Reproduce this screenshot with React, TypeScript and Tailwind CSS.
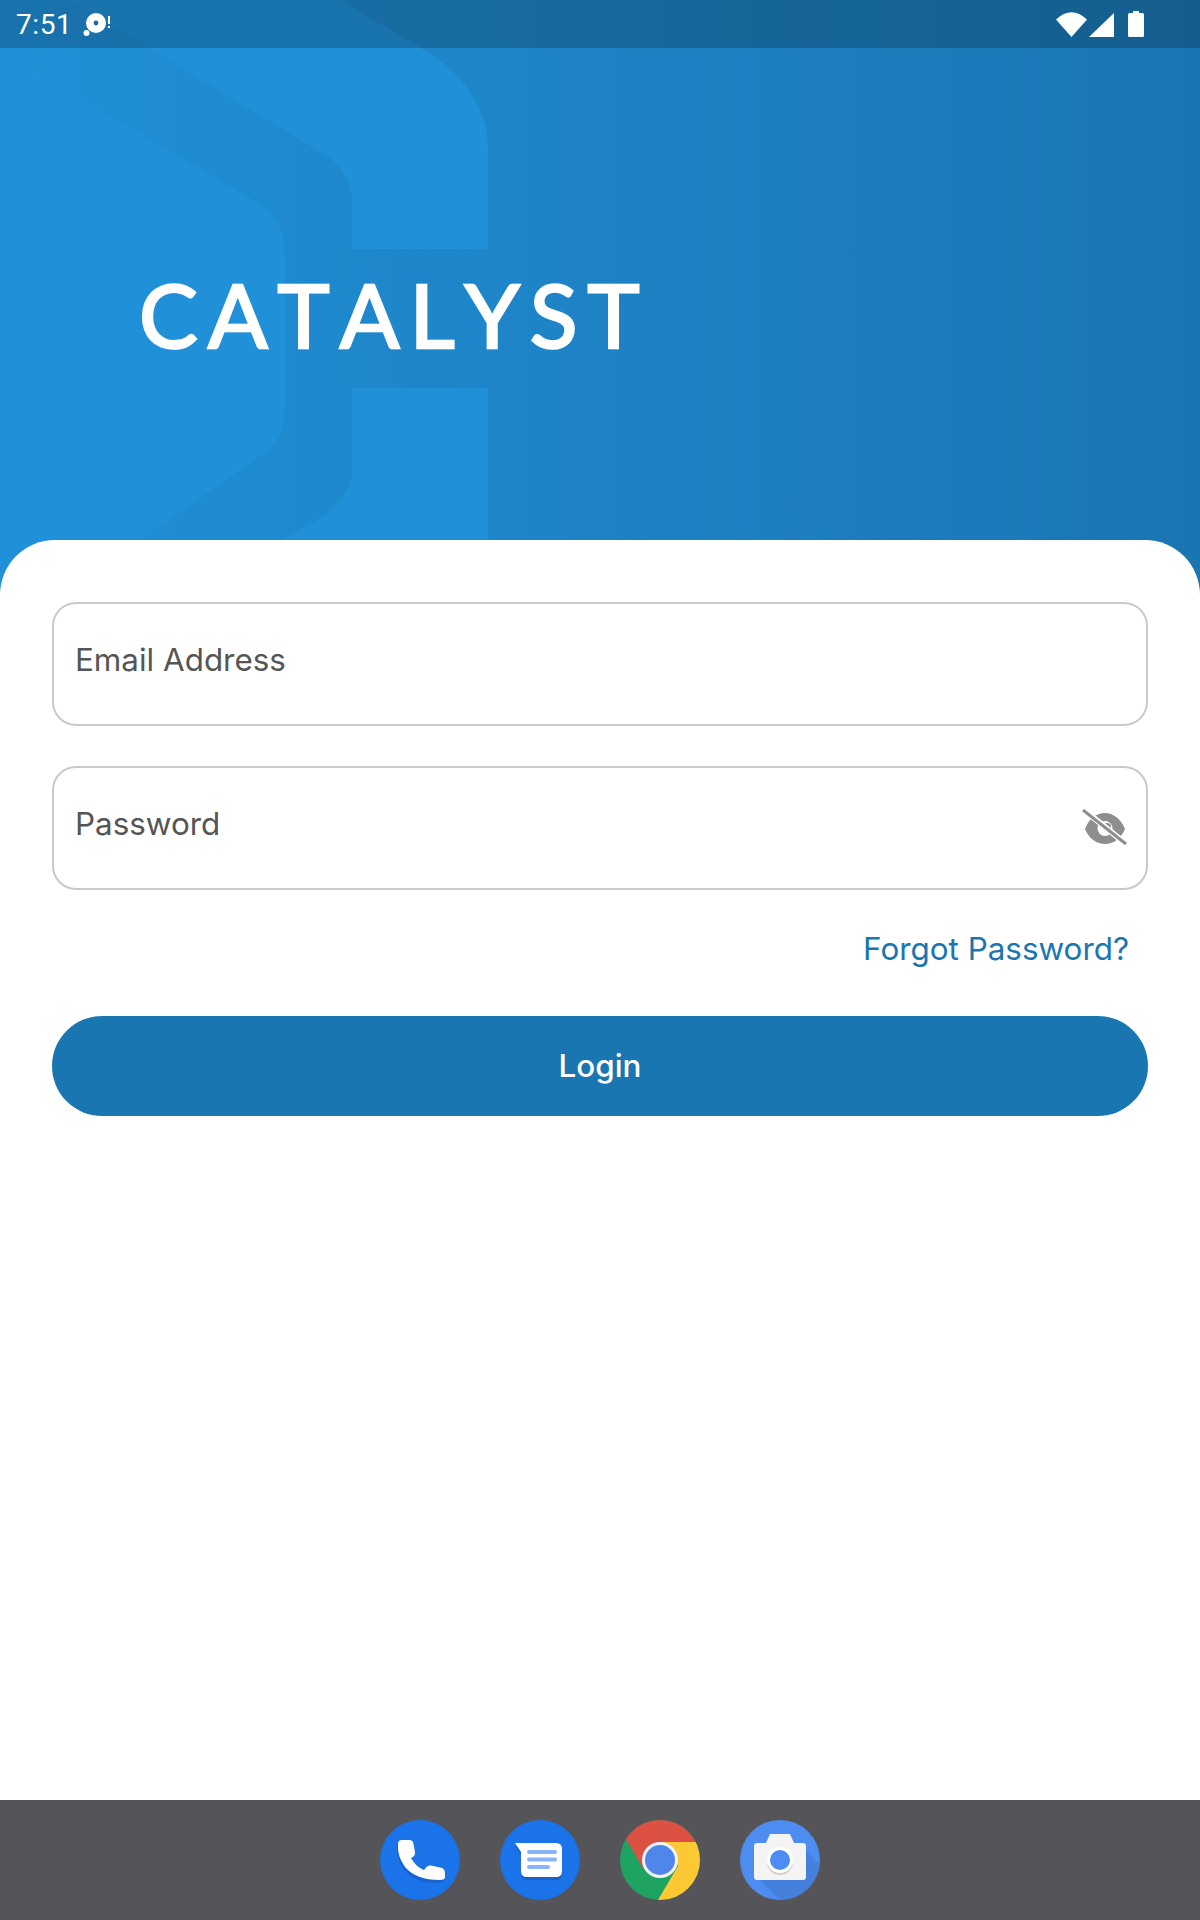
import React from "react";

function HeroShape() {
  return (
    <svg className="absolute left-0 top-0" width="600" height="600" viewBox="0 0 600 600" aria-hidden="true">
      <path
        d="M0 -10 L323 -10 L421 48 Q488 88 488 150 L488 249 L352 249 L352 205 Q352 172 325 155 L70 0 L0 0 Z M0 50 L70 93 L262 205 Q285 220 285 255 L285 410 Q285 440 262 455 L140 540 L0 600 Z M352 388 L488 388 L488 600 L260 600 L284 539 L320 518 Q352 497 352 470 Z"
        fill="#2090d8"
      />
    </svg>
  );
}

function StatusBar() {
  return (
    <div className="relative flex h-12 items-center justify-between bg-black/20 pl-[16px] pr-[56px]">
      <div className="flex items-center">
        <span className="pt-[2px] font-['Roboto',sans-serif] text-[28px] leading-none tracking-[0.02em] text-white">7:51</span>
        <svg className="ml-[11px] mt-[3px]" width="28" height="26" viewBox="0 0 28 26" aria-hidden="true">
          <circle cx="13" cy="10" r="10" fill="#fff" />
          <circle cx="13" cy="10" r="2.4" fill="#1a6ba3" />
          <circle cx="3.5" cy="20" r="3" fill="#fff" />
          <rect x="25" y="3" width="2" height="8" fill="#fff" />
          <rect x="25" y="13" width="2" height="2" fill="#fff" />
        </svg>
      </div>
      <div className="flex items-center gap-[14px]">
        <div className="flex items-end gap-[2px]">
          <svg width="31" height="25" viewBox="0 0 31 25" aria-hidden="true">
            <path d="M0 7.5 Q15.5 -7 31 7.5 L15.5 25 Z" fill="#fff" />
          </svg>
          <svg width="25" height="24" viewBox="0 0 25 24" aria-hidden="true">
            <path d="M25 0 V24 H0 Z" fill="#fff" />
          </svg>
        </div>
        <svg width="16" height="26" viewBox="0 0 16 26" aria-hidden="true">
          <path d="M5 0 H11 V2 H14.5 Q16 2 16 3.5 V24.5 Q16 26 14.5 26 H1.5 Q0 26 0 24.5 V3.5 Q0 2 1.5 2 H5 Z" fill="#fff" />
        </svg>
      </div>
    </div>
  );
}

function EyeOff() {
  return (
    <svg width="46" height="38" viewBox="0 0 46 38" aria-hidden="true">
      <path d="M4 20 C8 9 16 4 24 4 C32 4 40 10 44 20 C40 30 32 35 24 35 C16 35 8 30 4 20 Z" fill="#8e8e8e" />
      <circle cx="24" cy="19.5" r="7.5" fill="#fff" />
      <circle cx="26" cy="18" r="4" fill="#8e8e8e" />
      <line x1="3" y1="1" x2="45" y2="35" stroke="#fff" strokeWidth="6" />
      <line x1="2" y1="1" x2="45" y2="35" stroke="#8e8e8e" strokeWidth="3" />
    </svg>
  );
}

function Field({ label, children }: { label: string; children?: React.ReactNode }) {
  return (
    <div className="flex h-[124px] items-center justify-between rounded-[24px] border-2 border-[#c9c9c9] pb-[6px] pl-[21px] pr-[19px]">
      <span className="font-['Inter',sans-serif] text-[31.4px] leading-none text-[#555555]">{label}</span>
      {children && <span className="mt-[6px] flex">{children}</span>}
    </div>
  );
}

function PhoneIcon() {
  const d =
    "M22 20 H29 Q33 20 33.5 24 L35 32 Q35.5 35 33 37 L31 38 Q36 47 44 50 L46.5 47 Q48 45 51 45.5 L60 47.5 Q65 48 65 53 V57 Q65 60 60 60 Q36 60 25 47 Q17 36 18 24 Q18 20 22 20 Z";
  return (
    <svg width="80" height="80" viewBox="0 0 80 80" aria-hidden="true">
      <circle cx="40" cy="40" r="40" fill="#1a73e8" />
      <path d={d} transform="translate(-1 3)" fill="#1558b8" opacity="0.55" />
      <path d={d} fill="#fff" />
    </svg>
  );
}

function MessagesIcon() {
  const bubble = "M15 23 H56 Q62 23 62 29 V51 Q62 57 56 57 H27 Q21 57 21 51 V32 Z";
  return (
    <svg width="80" height="80" viewBox="0 0 80 80" aria-hidden="true">
      <circle cx="40" cy="40" r="40" fill="#1a73e8" />
      <path d={bubble} transform="translate(0 3)" fill="#1558b8" opacity="0.6" />
      <path d={bubble} fill="#fff" />
      <rect x="27" y="30" width="30" height="4" rx="2" fill="#8ab4f8" />
      <rect x="27" y="37.5" width="30" height="4" rx="2" fill="#8ab4f8" />
      <rect x="27" y="45" width="23" height="4" rx="2" fill="#8ab4f8" />
    </svg>
  );
}

function ChromeIcon() {
  return (
    <svg width="80" height="80" viewBox="0 0 80 80" aria-hidden="true">
      <defs>
        <clipPath id="chrome-clip">
          <circle cx="40" cy="40" r="40" />
        </clipPath>
      </defs>
      <g clipPath="url(#chrome-clip)">
        <rect width="80" height="80" fill="#1ea362" />
        <polygon points="40,22 80,22 80,80 38,80 58,46" fill="#fcc934" />
        <polygon points="6,19 24,50 40,22 80,22 80,0 0,0 0,19" fill="#dd5044" />
      </g>
      <circle cx="40" cy="40" r="18" fill="#f1f3f4" />
      <circle cx="40" cy="40" r="15" fill="#5086ec" />
    </svg>
  );
}

function CameraIcon() {
  return (
    <svg width="80" height="80" viewBox="0 0 80 80" aria-hidden="true">
      <defs>
        <clipPath id="camera-clip">
          <circle cx="40" cy="40" r="40" />
        </clipPath>
      </defs>
      <circle cx="40" cy="40" r="40" fill="#4d8cf0" />
      <g clipPath="url(#camera-clip)">
        <polygon points="60,25 90,55 90,90 50,90 20,60" fill="#4680dd" />
      </g>
      <path d="M30 14 H50 L54 23 H63 Q66 23 66 26 V57 Q66 60 63 60 H17 Q14 60 14 57 V26 Q14 23 17 23 H26 Z" fill="#f4f4f4" />
      <circle cx="40" cy="42" r="13" fill="#cfcfcf" />
      <circle cx="40" cy="40" r="13" fill="#fff" />
      <circle cx="40" cy="40" r="10" fill="#4d8cf0" />
    </svg>
  );
}

export default function App() {
  return (
    <div className="flex min-h-[1920px] flex-col bg-white font-['Inter',sans-serif]">
      <div className="relative h-[600px] overflow-hidden bg-gradient-to-r from-[#2090d8] to-[#1a76b3]">
        <HeroShape />
        <StatusBar />
        <div className="relative ml-[139px] mt-[222px] font-['Lato',sans-serif] text-[88px] font-normal leading-none tracking-[0.115em] text-white [font-kerning:none] [-webkit-text-stroke:2.5px_white]">
          CATALYST
        </div>
      </div>
      <main className="relative -mt-[60px] flex flex-1 flex-col rounded-t-[55px] bg-white px-[52px] pt-[62px]">
        <div className="flex flex-col gap-[40px]">
          <Field label="Email Address" />
          <Field label="Password">
            <EyeOff />
          </Field>
        </div>
        <a className="mt-[40px] self-end pr-[19px] text-[31.4px] leading-[38px] text-[#1a76b0]">Forgot Password?</a>
        <button className="mt-[48px] h-[100px] rounded-full bg-[#1a76b0] pt-[2px] text-[31.4px] font-medium text-white">
          Login
        </button>
      </main>
      <div className="flex h-[120px] items-center justify-center gap-[40px] bg-[#555459]">
        <PhoneIcon />
        <MessagesIcon />
        <ChromeIcon />
        <CameraIcon />
      </div>
    </div>
  );
}
